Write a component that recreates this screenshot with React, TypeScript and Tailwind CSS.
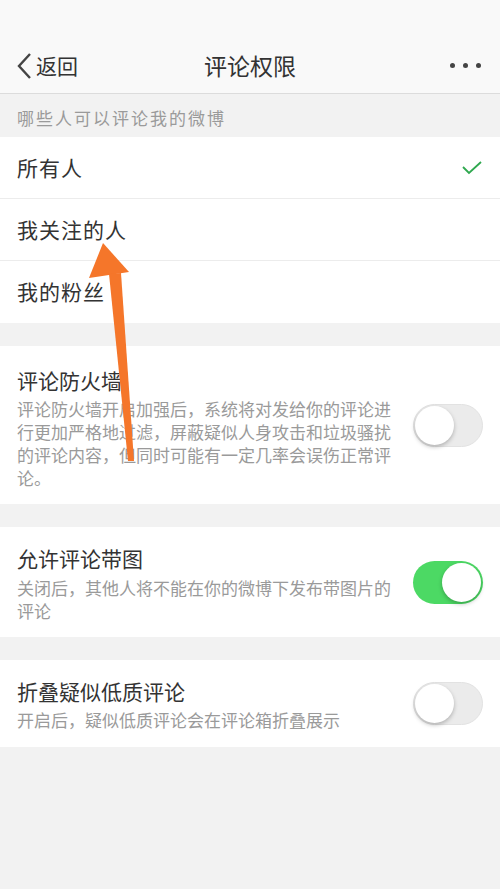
import { useState } from "react";

const font = { fontFamily: '"Noto Sans CJK SC", "Noto Sans", sans-serif' };

function Toggle({ on }: { on: boolean }) {
  return (
    <div
      className={
        on
          ? "flex h-[43px] w-[70px] shrink-0 items-center justify-end rounded-full bg-[#4cd964] p-[2px]"
          : "flex h-[43px] w-[70px] shrink-0 items-center justify-start rounded-full border border-[#e2e2e2] bg-[#ebebeb] p-[1px]"
      }
    >
      <div className="h-[39px] w-[39px] rounded-full bg-white shadow-[0_2px_4px_rgba(0,0,0,0.25)]" />
    </div>
  );
}

const audiences = ["所有人", "我关注的人", "我的粉丝"];

export default function App() {
  const [selected] = useState(0);

  return (
    <div className="relative min-h-[889px] w-full bg-[#f2f2f2]" style={font}>
      {/* nav */}
      <div className="border-b border-[#dcdcdc] bg-[#f9f9f9]">
        <div className="h-[38px]" />
        <div className="flex h-[55px] items-center justify-between px-[17px]">
          <div className="flex w-[100px] items-center text-[21px] text-[#333]">
            <svg width="16" height="26" viewBox="0 0 16 26" className="mr-[3px]">
              <polyline points="13,1 2,13 13,25" fill="none" stroke="#444" strokeWidth="2.4" />
            </svg>
            <span>返回</span>
          </div>
          <div className="text-[23px] text-[#333]">评论权限</div>
          <div className="flex w-[100px] justify-end gap-[8px] pr-[2px]">
            <span className="h-[5px] w-[5px] rounded-full bg-[#444]" />
            <span className="h-[5px] w-[5px] rounded-full bg-[#444]" />
            <span className="h-[5px] w-[5px] rounded-full bg-[#444]" />
          </div>
        </div>
      </div>

      {/* section header */}
      <div className="flex h-[43px] items-end px-[17px] pb-[8px] text-[17px] leading-[22px] tracking-[2px] text-[#9a9a9a]">
        哪些人可以评论我的微博
      </div>

      {/* audience list */}
      <div className="bg-white">
        {audiences.map((label, i) => (
          <div
            key={label}
            className={
              i < audiences.length - 1
                ? "flex h-[62px] items-center justify-between border-b border-[#ececec] px-[17px]"
                : "flex h-[62px] items-center justify-between px-[17px]"
            }
          >
            <span className="text-[21px] tracking-[1px] text-[#333]">{label}</span>
            {selected === i && (
              <svg width="20" height="14" viewBox="0 0 20 14" className="mr-[1px]">
                <polyline points="1,6 7,12 19,1" fill="none" stroke="#2fa84f" strokeWidth="1.8" />
              </svg>
            )}
          </div>
        ))}
      </div>

      <div className="h-[23px]" />

      {/* firewall */}
      <div className="flex items-center bg-white pl-[17px] pr-[17px]">
        <div className="w-[380px] pt-[20px] pb-[15px]">
          <div className="text-[21px] leading-[28px] text-[#333]">评论防火墙</div>
          <div className="mt-[3px] text-[17px] leading-[23px] text-[#9a9a9a]">
            评论防火墙开启加强后，系统将对发给你的评论进行更加严格地过滤，屏蔽疑似人身攻击和垃圾骚扰的评论内容，但同时可能有一定几率会误伤正常评论。
          </div>
        </div>
        <div className="flex flex-1 justify-end">
          <Toggle on={false} />
        </div>
      </div>

      <div className="h-[23px]" />

      {/* images */}
      <div className="flex items-center bg-white pl-[17px] pr-[17px]">
        <div className="w-[380px] pt-[17px] pb-[15px]">
          <div className="text-[21px] leading-[28px] text-[#333]">允许评论带图</div>
          <div className="mt-[4px] text-[17px] leading-[23px] text-[#9a9a9a]">
            关闭后，其他人将不能在你的微博下发布带图片的评论
          </div>
        </div>
        <div className="flex flex-1 justify-end">
          <Toggle on={true} />
        </div>
      </div>

      <div className="h-[23px]" />

      {/* fold */}
      <div className="flex items-center bg-white pl-[17px] pr-[17px]">
        <div className="w-[380px] pt-[17px] pb-[16px]">
          <div className="text-[21px] leading-[28px] text-[#333]">折叠疑似低质评论</div>
          <div className="mt-[3px] text-[17px] leading-[23px] text-[#9a9a9a]">
            开启后，疑似低质评论会在评论箱折叠展示
          </div>
        </div>
        <div className="flex flex-1 justify-end">
          <Toggle on={false} />
        </div>
      </div>

      {/* annotation arrow drawn over the screenshot */}
      <svg className="pointer-events-none absolute left-0 top-0" width="500" height="889">
        <polygon points="103,243 89,278 129,272" fill="#f5762a" />
        <polygon points="109,274 121,273 134,461 128,461" fill="#f5762a" />
      </svg>
    </div>
  );
}
